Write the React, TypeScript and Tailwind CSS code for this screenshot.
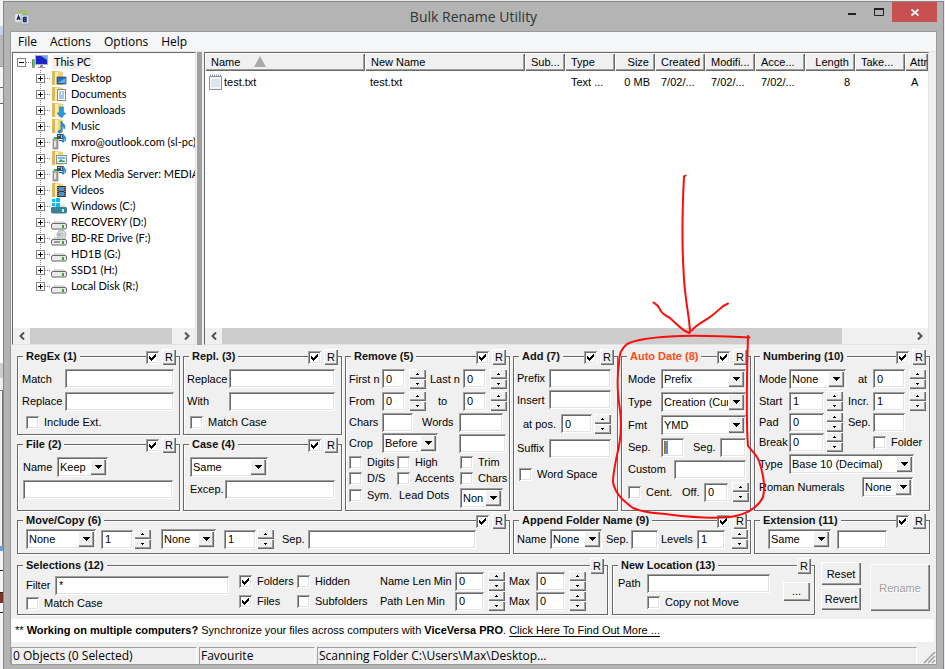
import React from "react";

const SUNKEN =
  "bg-white shadow-[inset_1px_1px_0_#a0a0a0,inset_-1px_-1px_0_#fff,inset_2px_2px_0_#696969,inset_-2px_-2px_0_#e3e3e3]";
const RAISED =
  "bg-[#f0f0f0] shadow-[inset_1px_1px_0_#fff,inset_-1px_-1px_0_#696969,inset_-2px_-2px_0_#a0a0a0]";

function Txt({ id, value = "", className = "w-8", label }: { id: string; value?: string; className?: string; label?: string }) {
  return (
    <input
      id={id}
      type="text"
      aria-label={label}
      defaultValue={value}
      className={`h-[19px] min-w-0 px-1 outline-none ${SUNKEN} ${className}`}
    />
  );
}

function Lbl({ to, children, className = "" }: { to: string; children: React.ReactNode; className?: string }) {
  return (
    <label htmlFor={to} className={`shrink-0 whitespace-nowrap ${className}`}>
      {children}
    </label>
  );
}

function Spin({ name }: { name: string }) {
  return (
    <span className="flex w-[17px] shrink-0 flex-col">
      <button type="button" aria-label={`Increase ${name}`} className={`flex h-[10px] items-center justify-center ${RAISED}`}>
        <svg width="3" height="2" viewBox="0 0 3 2" shapeRendering="crispEdges">
          <path d="M1 0h1v1h1v1H0V1h1z" />
        </svg>
      </button>
      <button type="button" aria-label={`Decrease ${name}`} className={`flex h-[10px] items-center justify-center ${RAISED}`}>
        <svg width="3" height="2" viewBox="0 0 3 2" shapeRendering="crispEdges">
          <path d="M0 0h3v1H2v1H1V1H0z" />
        </svg>
      </button>
    </span>
  );
}

function Sel({ id, value, className = "", label }: { id: string; value: string; className?: string; label?: string }) {
  return (
    <span className={`relative h-5 min-w-0 ${className}`}>
      <select
        id={id}
        aria-label={label}
        className={`block h-5 w-full appearance-none overflow-hidden pr-[14px] pl-[3px] outline-none ${SUNKEN}`}
      >
        <option>{value}</option>
      </select>
      <span className={`pointer-events-none absolute top-[2px] right-[2px] flex h-4 w-4 items-center justify-center ${RAISED}`}>
        <svg width="7" height="4" viewBox="0 0 7 4" shapeRendering="crispEdges">
          <path d="M0 0h7v1H6v1H5v1H4v1H3V3H2V2H1V1H0z" />
        </svg>
      </span>
    </span>
  );
}

function Tick({ checked = false, label, text, className = "" }: { checked?: boolean; label?: string; text?: string; className?: string }) {
  return (
    <label className={`flex shrink-0 items-center gap-[5px] whitespace-nowrap ${className}`}>
      <span className="grid h-[13px] w-[13px]">
        <input
          type="checkbox"
          aria-label={label}
          defaultChecked={checked}
          className={`peer h-[13px] w-[13px] appearance-none [grid-area:1/1] ${SUNKEN}`}
        />
        <svg viewBox="0 0 13 13" shapeRendering="crispEdges" className="pointer-events-none hidden h-[13px] w-[13px] [grid-area:1/1] peer-checked:block">
          <path d="M3 5h1v1h1v1h1V6h1V5h1V4h1V3h1v3H9v1H8v1H7v1H6v1H5V9H4V8H3z" />
        </svg>
      </span>
      {text}
    </label>
  );
}

function Group({ title, tick = true, hot = false, className = "", children }: { title: string; tick?: boolean; hot?: boolean; className?: string; children: React.ReactNode }) {
  return (
    <section className={`relative flex min-w-0 ${className}`}>
      <fieldset className="w-full min-w-0 border border-[#696969] shadow-[1px_1px_0_#fff,inset_1px_1px_0_#fff]">
        <legend className={`ml-[5px] h-[14px] bg-[#f0f0f0] px-[3px] leading-[14px] font-bold ${hot ? "text-[#ff4a14]" : "text-[#111]"}`}>{title}</legend>
        {children}
      </fieldset>
      <div className="absolute top-0 right-1 flex items-center">
        {tick && (
          <span className="bg-[#f0f0f0] pr-[3px]">
            <Tick checked label={`Enable ${title}`} />
          </span>
        )}
        <button type="button" aria-label={`Reset ${title}`} className={`h-4 w-[14px] text-center leading-4 ${RAISED}`}>
          R
        </button>
      </div>
    </section>
  );
}

const FOLDER = (
  <>
    <path d="M1 1h6l5 1v13H1z" fill="#efd27a" />
    <path d="M1 1h3v14H1z" fill="#dcb65a" />
    <path d="M4 2h3v13H4z" fill="#fbeeb0" />
  </>
);

function Drive() {
  return (
    <>
      <path d="M3 7h10l3 4H0z" fill="#dadada" />
      <rect x=".5" y="9.500" width="15" height="5.500" rx="1.500" fill="#e9e9ee" stroke="#66666e" />
      <rect x="11" y="11" width="2" height="3" fill="#3da52c" />
    </>
  );
}

function Glyph({ kind }: { kind: string }) {
  return (
    <svg width="16" height="16" viewBox="0 0 16 16" className="shrink-0" aria-hidden="true">
      {["desktop", "documents", "downloads", "music", "pictures", "videos"].includes(kind) && FOLDER}
      {kind === "desktop" && (
        <>
          <rect x="6" y="7" width="9" height="7" fill="#2b6cc4" stroke="#234" strokeWidth=".6" />
          <path d="M6.500 13l8-5v5z" fill="#5eb2f0" />
        </>
      )}
      {kind === "documents" && (
        <>
          <rect x="6.500" y="3.500" width="8" height="11" fill="#fff" stroke="#8a8a8a" />
          <path d="M8 6h2m1 0h2M8 8h2m1 0h2M8 10h5M8 12h5" stroke="#4f8fd0" />
        </>
      )}
      {kind === "downloads" && <path d="M8.500 5h4v6h2.500l-4.500 5L6 11h2.500z" fill="#1f9be8" stroke="#1270b8" strokeWidth=".5" />}
      {kind === "music" && <path d="M10 3c1 2 4 3 4 6l-1 2c0-2-1-3-2-3v5c0 2-4 3-4 1s2-2 3-2z" fill="#1e88d8" stroke="#1e88d8" strokeWidth=".8" />}
      {kind === "pictures" && (
        <>
          <rect x="5.500" y="5.500" width="10" height="8" fill="#e8f5fd" stroke="#8a9098" />
          <path d="M7 12l3-3 2 2 1-1 1 2z" fill="#3c9a64" />
          <path d="M7 7h7v2H7z" fill="#6bb8ee" />
        </>
      )}
      {kind === "videos" && (
        <>
          <rect x="6" y="4" width="9" height="11" fill="#333" />
          <path d="M8 5h5v4H8zM8 10h5v4H8z" fill="#4a94cf" />
          <path d="M7 5v10M14 5v10" stroke="#ddd" strokeDasharray="1 1" />
        </>
      )}
      {kind === "server" && (
        <>
          <path d="M2 5l5-2v12H2z" fill="#a8a8a8" stroke="#666" strokeWidth=".6" />
          <path d="M3 7h2v6H3z" fill="#e4e4e4" />
          <path d="M3 3h3v2H3z" fill="#37b24d" />
          <path d="M6 0h6v5H6zM8 6h4v1H8z" fill="#3a4a58" />
          <path d="M7 1h2v1H7zm3 0h1v3h-1z" fill="#8cd0ff" />
          <path d="M12 0l3 4-1 3v-3h-1v4h-2V6h1z" fill="#1e8fe0" stroke="#1e8fe0" strokeWidth=".8" />
        </>
      )}
      {kind === "pc" && (
        <>
          <path d="M0 5h3v9H0z" fill="#9c9c9c" />
          <path d="M0 6h1v6H0z" fill="#3a3" />
          <rect x="3.500" y="1.500" width="12" height="9" fill="#1a24c8" stroke="#aeb4ba" />
          <path d="M9 2h6v4z" fill="#6aa0ff" />
          <path d="M8 11h3v2h2v1H6v-1h2z" fill="#8e959c" />
        </>
      )}
      {kind === "windows" && (
        <>
          <Drive />
          <rect x="0" y="9" width="16" height="6" rx="1.500" fill="#3d8196" />
          <rect x="11" y="11" width="2" height="3" fill="#9fe" />
          <path d="M1 1h3v3H1zm4-1h4v4H5zM1 5h3v3H1zm4 0h4v4H5z" fill="#00bdf2" />
        </>
      )}
      {kind === "disc" && (
        <>
          <Drive />
          <circle cx="10.500" cy="4.800" r="4.500" fill="#d7dcd7" stroke="#888" strokeWidth=".6" />
          <circle cx="10.500" cy="4.800" r="1.300" fill="#fff" stroke="#777" strokeWidth=".6" />
          <path d="M7 3l2 1-1 3z" fill="#7cb07c" />
          <path d="M3 12h6" stroke="#444" />
        </>
      )}
      {kind === "drive" && <Drive />}
    </svg>
  );
}

const TREE: [string, string][] = [
  ["desktop", "Desktop"],
  ["documents", "Documents"],
  ["downloads", "Downloads"],
  ["music", "Music"],
  ["server", "mxro@outlook.com (sl-pc)"],
  ["pictures", "Pictures"],
  ["server", "Plex Media Server: MEDIA"],
  ["videos", "Videos"],
  ["windows", "Windows (C:)"],
  ["drive", "RECOVERY (D:)"],
  ["disc", "BD-RE Drive (F:)"],
  ["drive", "HD1B (G:)"],
  ["drive", "SSD1 (H:)"],
  ["drive", "Local Disk (R:)"],
];

function Branch({ open = false, last = false }: { open?: boolean; last?: boolean }) {
  return (
    <svg width="15" height="16" viewBox="0 0 15 16" shapeRendering="crispEdges" className="shrink-0" aria-hidden="true">
      {!open && <path d={last ? "M4.500 0v8" : "M4.500 0v16"} stroke="#808080" strokeDasharray="1 1" />}
      <path d="M9 8.500h6" stroke="#808080" strokeDasharray="1 1" />
      <rect x=".5" y="4.500" width="8" height="8" fill="#fff" stroke="#848484" />
      <path d={open ? "M2 8.500h5" : "M2 8.500h5M4.500 6v5"} stroke="#000" />
    </svg>
  );
}

function ScrollBar({ thumb, name }: { thumb: string; name: string }) {
  return (
    <div className="flex h-4 shrink-0 bg-[#f0f0f0]">
      <button type="button" aria-label={`Scroll ${name} left`} className="flex w-[17px] items-center justify-center">
        <svg width="6" height="8" viewBox="0 0 6 8" fill="none" stroke="#505050" strokeWidth="2">
          <path d="M5 .500L1.500 4 5 7.500" />
        </svg>
      </button>
      <div className="flex-1">
        <div className={`h-full bg-[#cdcdcd] ${thumb}`} />
      </div>
      <button type="button" aria-label={`Scroll ${name} right`} className="flex w-[17px] items-center justify-center">
        <svg width="6" height="8" viewBox="0 0 6 8" fill="none" stroke="#505050" strokeWidth="2">
          <path d="M1 .500L4.500 4 1 7.500" />
        </svg>
      </button>
    </div>
  );
}

const COLUMNS: { name: string; cell: string; width: string; right?: boolean }[] = [
  { name: "Name", cell: "test.txt", width: "w-[160px]" },
  { name: "New Name", cell: "test.txt", width: "w-[160px]" },
  { name: "Sub...", cell: "", width: "w-[40px]" },
  { name: "Type", cell: "Text ...", width: "w-[50px]" },
  { name: "Size", cell: "0 MB", width: "w-[40px]", right: true },
  { name: "Created", cell: "7/02/...", width: "w-[50px]" },
  { name: "Modifi...", cell: "7/02/...", width: "w-[50px]" },
  { name: "Acce...", cell: "7/02/...", width: "w-[50px]" },
  { name: "Length", cell: "8", width: "w-[50px]", right: true },
  { name: "Take...", cell: "", width: "w-[50px]" },
  { name: "Attr", cell: "A", width: "w-[23px]" },
];

function FileList() {
  return (
    <table className="w-full table-fixed border-collapse text-left">
      <colgroup>
        {COLUMNS.map((c) => (
          <col key={c.name} className={c.width} />
        ))}
      </colgroup>
      <thead>
        <tr>
          {COLUMNS.map((c, i) => (
            <th
              key={c.name}
              className={`h-[18px] overflow-hidden p-0 font-normal whitespace-nowrap ${i === 10 ? "pl-[5px]" : "px-[6px]"} ${c.right ? "text-right" : ""} ${RAISED}`}
            >
              {c.name}
              {i === 0 && (
                <svg width="12" height="11" viewBox="0 0 12 11" className="ml-[14px] inline-block align-[-1px]" aria-hidden="true">
                  <path d="M6 0l6 11H0z" fill="#a9a9a9" />
                </svg>
              )}
            </th>
          ))}
        </tr>
      </thead>
      <tbody>
        <tr>
          {COLUMNS.map((c, i) => (
            <td key={c.name} className={`h-[22px] overflow-hidden p-0 whitespace-nowrap ${c.right ? "pr-[5px] text-right" : i === 0 ? "pl-1" : i === 1 ? "pl-[5px]" : "pl-[6px]"}`}>
              {i === 0 ? (
                <span className="flex items-center gap-[2px]">
                  <svg width="13" height="16" viewBox="0 0 13 16" aria-hidden="true">
                    <path d="M.500 2.500h12v13H.500z" fill="#f4f8fa" stroke="#8b9296" />
                    <path d="M2 6h9M2 8h9M2 10h9M2 12h9" stroke="#c3d3dc" />
                    <path d="M1 1.500h11" stroke="#8b9296" strokeWidth="2" strokeDasharray="1 1" />
                  </svg>
                  {c.cell}
                </span>
              ) : (
                c.cell
              )}
            </td>
          ))}
        </tr>
      </tbody>
    </table>
  );
}

function Annotation() {
  return (
    <svg width="945" height="669" viewBox="0 0 945 669" fill="none" stroke="#fb0d0d" strokeWidth="2" strokeLinecap="round" strokeLinejoin="round" className="pointer-events-none absolute top-0 left-0" aria-hidden="true">
      <path d="M685.500 175.500l-1.500 1C682 215 682 245 683.500 270c1 30 6 45 6.500 62" />
      <path d="M653.500 302.500c3 2 5 3 6 6 2 6 6 6 11 10 7 6 11 12 19 14.500" />
      <path d="M728 303.500c-8 3-10 8-16 12-7 6-15 8-20 15" />
      <path d="M749.500 337.500C720 336 692 335 670 336.500c-18 1-34 3-43 7.500-6 5-8 10-8 20-3 18-1 33 1 46 2 17 1 30-3 45-2 11-4 18-4 27 2 11 9 18 20 26 10 5 24 5 36 6.500 24 3 44 4 61 2.500 14-2 27-8 33-20 3-12 0-24-4-36-3-7-7-10-11-15-2-24-1-76 0-110" />
    </svg>
  );
}

function BehindLeft() {
  return (
    <div className="flex w-[3px] shrink-0 flex-col bg-[#f6f6f6]" aria-hidden="true">
      <div className="h-[25px]" />
      <div className="h-[9px] bg-[#c6d2e6]" />
      <div className="h-[31px] bg-[#b9b9b9]" />
      <div className="h-[21px] border-t border-[#999]" />
      <div className="h-[17px] border-y border-[#666] bg-[#f0f0f0]" />
      <div className="h-[259px] bg-white" />
      <div className="h-[15px] bg-[#cdcdcd]" />
      <div className="h-[12px] bg-[#f0f0f0]" />
      <div className="h-[156px] border-t border-r border-[#777] bg-[#f0f0f0]" />
      <div className="h-[5px] bg-[#6a9fd0]" />
      <div className="h-[20px] border-b border-[#222]" />
      <div className="h-[22px] border-b border-[#222]" />
      <div className="h-[10px] bg-[#7b3527]" />
      <div className="h-[10px] border-b border-[#222]" />
      <div className="flex-1" />
    </div>
  );
}

export default function App() {
  return (
    <div className="relative flex min-h-screen overflow-hidden bg-[#e9edf3] pt-[1px] pr-[1px] font-['Liberation_Sans',Arial,sans-serif] text-[11px] leading-[14px] text-black">
      <BehindLeft />
      <div className="flex min-w-0 flex-1 flex-col border-t border-r border-l border-[#858585] bg-[#b4b4b4] px-[6px] pb-1">
        <header className="flex h-[29px] items-start">
          <div className="flex h-[29px] w-[99px] items-center pl-1">
            <svg width="16" height="16" viewBox="0 0 16 16" aria-label="Bulk Rename Utility" role="img">
              <path d="M3 5c2-5 7-5 8-3l2-1v5H8l2-2C8 2 5 3 5 5z" fill="#a3bf62" />
              <rect x="1" y="5" width="7" height="8" rx="1" fill="#e8eef8" stroke="#b8c4dc" strokeWidth=".6" />
              <rect x="7" y="6" width="8" height="9" rx="1" fill="#cfdcf0" stroke="#8898b8" strokeWidth=".6" />
              <path d="M3 11l1.500-4L6 11M3.500 9.700h2M9.500 8v5M9.500 8.500h2.500v4H9.500M9.500 10.500H12" fill="none" stroke="#17264e" strokeWidth="1.300" />
            </svg>
          </div>
          <h1 className="flex-1 text-center font-['Open_Sans','Noto_Sans',sans-serif] text-[14px] leading-[29px] text-[#333]">Bulk Rename Utility</h1>
          <button type="button" aria-label="Minimize" className="flex h-5 w-[27px] items-center justify-center">
            <svg width="8" height="8" viewBox="0 0 8 8"><path d="M0 5h8v2H0z" fill="#222" /></svg>
          </button>
          <button type="button" aria-label="Maximize" className="flex h-5 w-[27px] items-center justify-center">
            <svg width="10" height="8" viewBox="0 0 10 8"><path d="M.500 1h9v6.500h-9zM0 1h10" fill="none" stroke="#222" strokeWidth="1" /><path d="M0 0h10v2H0z" fill="#222" /></svg>
          </button>
          <button type="button" aria-label="Close" className="flex h-5 w-[45px] items-center justify-center bg-[#c75050]">
            <svg width="8" height="7" viewBox="0 0 8 7" stroke="#fff" strokeWidth="1.800"><path d="M.500.500l7 6M7.500.500l-7 6" /></svg>
          </button>
        </header>

        <main className="flex min-w-0 flex-1 flex-col border border-[#9a9a9a] bg-[#f0f0f0]">
          <nav className="flex h-[20px] gap-[13px] border-b border-[#e4e6e8] bg-[#f5f6f7] pl-[7px] font-['Open_Sans','Noto_Sans',sans-serif] text-[12px] leading-[19px]">
            <button type="button">File</button>
            <button type="button">Actions</button>
            <button type="button">Options</button>
            <button type="button">Help</button>
          </nav>

          <div className="flex flex-1 pr-[7px] pl-[1px]">
            <div className="mr-[1px] flex w-[184px] shrink-0 flex-col border border-t-[#696969] border-r-[#e3e3e3] border-b-[#e3e3e3] border-l-[#696969] bg-white">
              <ul className="flex-1 overflow-hidden pt-[1px] pl-1 font-[Lato,'Liberation_Sans',sans-serif] whitespace-nowrap">
                <li className="flex h-4 items-center">
                  <Branch open />
                  <Glyph kind="pc" />
                  <span className="ml-1 bg-[#f0f0f0] px-[2px]">This PC</span>
                </li>
                {TREE.map(([kind, name], i) => (
                  <li key={name} className="flex h-4 items-center pl-[19px]">
                    <Branch last={i === TREE.length - 1} />
                    <Glyph kind={kind} />
                    <span className="ml-1">{name}</span>
                  </li>
                ))}
              </ul>
              <ScrollBar thumb="w-[96%]" name="folders" />
            </div>
            <div className="mr-[2px] w-[5px] shrink-0 bg-[#a0a0a0]" />
            <div className="flex min-w-0 flex-1 flex-col border border-t-[#696969] border-r-[#e3e3e3] border-b-[#e3e3e3] border-l-[#696969] bg-white">
              <div className="flex-1 overflow-hidden">
                <FileList />
              </div>
              <ScrollBar thumb="w-[90%]" name="files" />
            </div>
          </div>

          <form className="flex flex-col gap-1 pt-1 pr-[6px] pb-1 pl-[6px]">
            <div className="grid grid-cols-[163fr_159fr_165fr_105fr_130fr_176fr] grid-rows-[86px_74px_41px] gap-x-[3px] gap-y-[2px]">
              <Group title="RegEx (1)">
                <div className="pt-1 pr-[5px] pl-1">
                  <div className="flex h-[23px] items-center"><Lbl to="rx-match" className="w-[43px]">Match</Lbl><Txt id="rx-match" className="flex-1" /></div>
                  <div className="flex h-[22px] items-center"><Lbl to="rx-replace" className="w-[43px]">Replace</Lbl><Txt id="rx-replace" className="flex-1" /></div>
                  <div className="flex h-[20px] items-center pl-1"><Tick text="Include Ext." /></div>
                </div>
              </Group>

              <Group title="Repl. (3)">
                <div className="pt-1 pr-[6px] pl-[3px]">
                  <div className="flex h-[23px] items-center"><Lbl to="rp-replace" className="w-[42px]">Replace</Lbl><Txt id="rp-replace" className="flex-1" /></div>
                  <div className="flex h-[22px] items-center"><Lbl to="rp-with" className="w-[42px]">With</Lbl><Txt id="rp-with" className="flex-1" /></div>
                  <div className="flex h-[20px] items-center pl-[3px]"><Tick text="Match Case" /></div>
                </div>
              </Group>

              <Group title="Remove (5)" className="row-span-2">
                <div className="pt-1 pr-[2px] pl-[3px]">
                  <div className="flex h-[23px] items-center">
                    <Lbl to="rm-first" className="w-[33px]">First n</Lbl><Txt id="rm-first" value="0" className="mr-1 w-[23px]" /><Spin name="First n" />
                    <Lbl to="rm-last" className="ml-auto w-[33px]">Last n</Lbl><Txt id="rm-last" value="0" className="mr-1 w-[23px]" /><Spin name="Last n" />
                  </div>
                  <div className="flex h-[22px] items-center">
                    <Lbl to="rm-from" className="w-[33px]">From</Lbl><Txt id="rm-from" value="0" className="mr-1 w-[23px]" /><Spin name="From" />
                    <Lbl to="rm-to" className="ml-auto w-[25px]">to</Lbl><Txt id="rm-to" value="0" className="mr-1 w-[23px]" /><Spin name="to" />
                  </div>
                  <div className="flex h-5 items-center pr-1">
                    <Lbl to="rm-chars" className="w-[33px]">Chars</Lbl><Txt id="rm-chars" className="w-[31px]" />
                    <Lbl to="rm-words" className="ml-auto w-[37px]">Words</Lbl><Txt id="rm-words" className="w-[44px]" />
                  </div>
                  <div className="flex h-[22px] items-center pr-[1px]">
                    <Lbl to="rm-crop" className="w-[33px]">Crop</Lbl><Sel id="rm-crop" value="Before" className="w-[56px]" />
                    <Txt id="rm-crop-text" label="Crop text" className="ml-auto w-[47px]" />
                  </div>
                  <div className="flex h-4 items-center">
                    <Tick text="Digits" className="w-[48px]" /><Tick text="High" className="w-[63px]" /><Tick text="Trim" />
                  </div>
                  <div className="flex h-4 items-center">
                    <Tick text="D/S" className="w-[48px]" /><Tick text="Accents" className="w-[63px]" /><Tick text="Chars" />
                  </div>
                  <div className="flex h-[22px] items-start pt-[2px]">
                    <Tick text="Sym." className="w-[50px]" /><Lbl to="rm-dots" className="w-[61px]">Lead Dots</Lbl><Sel id="rm-dots" value="Non" className="w-[43px]" />
                  </div>
                </div>
              </Group>

              <Group title="Add (7)" className="row-span-2">
                <div className="pt-1 pr-[6px] pl-[3px]">
                  <div className="flex h-[22px] items-center"><Lbl to="ad-prefix" className="w-[32px]">Prefix</Lbl><Txt id="ad-prefix" className="flex-1" /></div>
                  <div className="flex h-[21px] items-center"><Lbl to="ad-insert" className="w-[32px]">Insert</Lbl><Txt id="ad-insert" className="flex-1" /></div>
                  <div className="flex h-[27px] items-center pl-[6px]"><Lbl to="ad-pos" className="w-[38px]">at pos.</Lbl><Txt id="ad-pos" value="0" className="mr-[2px] flex-1" /><Spin name="at pos." /></div>
                  <div className="flex h-[22px] items-center"><Lbl to="ad-suffix" className="w-[32px]">Suffix</Lbl><Txt id="ad-suffix" className="flex-1" /></div>
                  <div className="flex h-[30px] items-center pl-[2px]"><Tick text="Word Space" /></div>
                </div>
              </Group>

              <Group title="Auto Date (8)" hot className="row-span-2">
                <div className="pt-1 pr-1 pl-[6px]">
                  <div className="flex h-[23px] items-center"><Lbl to="dt-mode" className="w-[33px]">Mode</Lbl><Sel id="dt-mode" value="Prefix" className="flex-1" /></div>
                  <div className="flex h-[23px] items-center"><Lbl to="dt-type" className="w-[33px]">Type</Lbl><Sel id="dt-type" value="Creation (Cur" className="flex-1" /></div>
                  <div className="flex h-[23px] items-center"><Lbl to="dt-fmt" className="w-[33px]">Fmt</Lbl><Sel id="dt-fmt" value="YMD" className="flex-1" /></div>
                  <div className="flex h-[22px] items-center">
                    <Lbl to="dt-sep" className="w-[33px]">Sep.</Lbl>
                    <span className={`flex h-[19px] w-[23px] items-center pl-[3px] ${SUNKEN}`}>
                      <span className="h-[13px] w-1 shrink-0 border-l border-[#c06010] bg-[#3399ff]" />
                      <input id="dt-sep" type="text" className="w-3 min-w-0 outline-none" />
                    </span>
                    <Lbl to="dt-seg" className="ml-auto w-[27px]">Seg.</Lbl><Txt id="dt-seg" className="w-[26px]" />
                  </div>
                  <div className="flex h-[22px] items-center"><Lbl to="dt-custom" className="w-[46px]">Custom</Lbl><Txt id="dt-custom" className="flex-1" /></div>
                  <div className="-mr-[3px] flex h-[24px] items-center">
                    <Tick text="Cent." className="w-[54px]" /><Lbl to="dt-off" className="w-[22px]">Off.</Lbl><Txt id="dt-off" value="0" className="mr-1 flex-1" /><Spin name="Off." />
                  </div>
                </div>
              </Group>

              <Group title="Numbering (10)" className="row-span-2">
                <div className="pt-1 pr-[3px] pl-1">
                  <div className="flex h-[23px] items-center">
                    <Lbl to="nm-mode" className="w-[30px]">Mode</Lbl><Sel id="nm-mode" value="None" className="w-[57px]" />
                    <Lbl to="nm-at" className="ml-auto w-[15px]">at</Lbl><Txt id="nm-at" value="0" className="mr-1 w-8" /><Spin name="at" />
                  </div>
                  <div className="flex h-[22px] items-center">
                    <Lbl to="nm-start" className="w-[30px]">Start</Lbl><Txt id="nm-start" value="1" className="mr-[2px] w-[35px]" /><Spin name="Start" />
                    <Lbl to="nm-incr" className="ml-auto w-[25px]">Incr.</Lbl><Txt id="nm-incr" value="1" className="mr-1 w-8" /><Spin name="Incr." />
                  </div>
                  <div className="flex h-5 items-center">
                    <Lbl to="nm-pad" className="w-[30px]">Pad</Lbl><Txt id="nm-pad" value="0" className="mr-[2px] w-[35px]" /><Spin name="Pad" />
                    <Lbl to="nm-sep" className="ml-auto w-[25px]">Sep.</Lbl><Txt id="nm-sep" className="mr-[21px] w-8" />
                  </div>
                  <div className="flex h-5 items-center">
                    <Lbl to="nm-break" className="w-[30px]">Break</Lbl><Txt id="nm-break" value="0" className="mr-[2px] w-[35px]" /><Spin name="Break" />
                    <Tick text="Folder" className="ml-auto w-[53px]" />
                  </div>
                  <div className="flex h-[23px] items-center pr-[12px]"><Lbl to="nm-type" className="w-[30px]">Type</Lbl><Sel id="nm-type" value="Base 10 (Decimal)" className="flex-1" /></div>
                  <div className="flex h-[24px] items-center justify-between pr-[13px]"><Lbl to="nm-roman">Roman Numerals</Lbl><Sel id="nm-roman" value="None" className="w-[51px]" /></div>
                </div>
              </Group>

              <Group title="File (2)">
                <div className="pt-1 pr-[6px] pl-[5px]">
                  <div className="flex h-[23px] items-center"><Lbl to="fl-name" className="w-[34px]">Name</Lbl><Sel id="fl-name" value="Keep" className="w-[51px]" /></div>
                  <div className="flex h-[22px] items-center"><Txt id="fl-text" label="File name" className="flex-1" /></div>
                </div>
              </Group>

              <Group title="Case (4)">
                <div className="pt-1 pr-[6px] pl-[6px]">
                  <div className="flex h-[23px] items-center"><Sel id="cs-mode" label="Case" value="Same" className="w-[78px]" /></div>
                  <div className="flex h-[22px] items-center"><Lbl to="cs-excep" className="w-[35px]">Excep.</Lbl><Txt id="cs-excep" className="flex-1" /></div>
                </div>
              </Group>

              <Group title="Move/Copy (6)" className="col-span-3">
                <div className="flex h-6 items-center pr-[33px] pl-2">
                  <Sel id="mv-mode" label="Move or copy" value="None" className="mr-[5px] w-[70px]" />
                  <Txt id="mv-n" label="Move count" value="1" className="mr-[1px] w-8" /><Spin name="move count" />
                  <Sel id="mv-to" label="Move to" value="None" className="mr-[8px] ml-[10px] w-[55px]" />
                  <Txt id="mv-pos" label="Move position" value="1" className="mr-[1px] w-8" /><Spin name="move position" />
                  <Lbl to="mv-sep" className="ml-2 w-[26px]">Sep.</Lbl><Txt id="mv-sep" className="flex-1" />
                </div>
              </Group>

              <Group title="Append Folder Name (9)" className="col-span-2">
                <div className="flex h-6 items-center pr-[2px] pl-[3px]">
                  <Lbl to="ap-name" className="w-[33px]">Name</Lbl><Sel id="ap-name" value="None" className="mr-1 w-[52px]" />
                  <Lbl to="ap-sep" className="w-[25px]">Sep.</Lbl><Txt id="ap-sep" className="w-[27px]" />
                  <Lbl to="ap-levels" className="ml-auto w-[36px]">Levels</Lbl><Txt id="ap-levels" value="1" className="mr-[6px] w-[28px]" /><Spin name="Levels" />
                </div>
              </Group>

              <Group title="Extension (11)">
                <div className="flex h-6 items-center gap-[6px] pr-[42px] pl-[13px]">
                  <Sel id="ex-mode" label="Extension" value="Same" className="w-[63px] shrink-0" />
                  <Txt id="ex-text" label="Extension text" className="flex-1" />
                </div>
              </Group>
            </div>

            <div className="flex h-[57px]">
              <Group title="Selections (12)" tick={false} className="mr-1 flex-1">
                <div className="flex pr-[21px] pl-2">
                  <div className="flex-1 pt-[3px]">
                    <div className="flex h-5 items-center"><Lbl to="sl-filter" className="w-[29px]">Filter</Lbl><Txt id="sl-filter" value="*" className="flex-1" /></div>
                    <div className="flex h-4 items-center"><Tick text="Match Case" /></div>
                  </div>
                  <div className="ml-[10px] w-[58px]">
                    <div className="flex h-[18px] items-center"><Tick checked text="Folders" /></div>
                    <div className="flex h-[22px] items-center"><Tick checked text="Files" /></div>
                  </div>
                  <div className="w-[83px]">
                    <div className="flex h-[18px] items-center"><Tick text="Hidden" /></div>
                    <div className="flex h-[22px] items-center"><Tick text="Subfolders" /></div>
                  </div>
                  <div>
                    <div className="flex h-[18px] items-center">
                      <Lbl to="sl-nmin" className="w-[75px]">Name Len Min</Lbl><Txt id="sl-nmin" value="0" className="mr-1 w-[29px]" /><Spin name="name length minimum" />
                      <Lbl to="sl-nmax" className="ml-1 w-[27px]">Max</Lbl><Txt id="sl-nmax" value="0" className="mr-1 w-[29px]" /><Spin name="name length maximum" />
                    </div>
                    <div className="flex h-[22px] items-center">
                      <Lbl to="sl-pmin" className="w-[75px]">Path Len Min</Lbl><Txt id="sl-pmin" value="0" className="mr-1 w-[29px]" /><Spin name="path length minimum" />
                      <Lbl to="sl-pmax" className="ml-1 w-[27px]">Max</Lbl><Txt id="sl-pmax" value="0" className="mr-1 w-[29px]" /><Spin name="path length maximum" />
                    </div>
                  </div>
                </div>
              </Group>

              <Group title="New Location (13)" tick={false} className="mr-[6px] w-[203px]">
                <div className="flex items-center gap-[13px] pr-1 pl-[5px]">
                  <div className="min-w-0 flex-1">
                    <div className="flex h-[22px] items-center"><Lbl to="nl-path" className="w-[29px]">Path</Lbl><Txt id="nl-path" className="flex-1" /></div>
                    <div className="flex h-4 items-center pl-[29px]"><Tick text="Copy not Move" /></div>
                  </div>
                  <button type="button" aria-label="Browse" className={`h-[19px] w-[27px] leading-[14px] ${RAISED}`}>...</button>
                </div>
              </Group>

              <div className="mr-[9px] flex w-[40px] flex-col gap-[2px] pt-1">
                <button type="button" className={`h-[23px] whitespace-nowrap ${RAISED}`}>Reset</button>
                <button type="button" className={`h-[23px] whitespace-nowrap ${RAISED}`}>Revert</button>
              </div>
              <button type="button" disabled className={`mt-[6px] h-[47px] w-[60px] text-[11px] text-[#a0a0a0] [text-shadow:1px_1px_0_#fff] ${RAISED}`}>Rename</button>
            </div>
          </form>

          <p className="mr-[2px] h-[23px] bg-white pl-1 leading-[23px] whitespace-nowrap">
            ** <b>Working on multiple computers?</b> Synchronize your files across computers with <b>ViceVersa PRO</b>.{" "}
            <a href="#more" className="underline underline-offset-2">Click Here To Find Out More ...</a>
          </p>

          <footer className="mt-[5px] flex h-[17px] gap-[2px] font-['Open_Sans','Noto_Sans',sans-serif] text-[12px] leading-4 whitespace-nowrap">
            <span className="w-[186px] border-t border-r border-l border-t-[#a0a0a0] border-r-white border-l-[#a0a0a0] pl-[1px]">0 Objects (0 Selected)</span>
            <span className="w-[116px] border-t border-r border-l border-t-[#a0a0a0] border-r-white border-l-[#a0a0a0] pl-[1px]">Favourite</span>
            <span className="flex-1 border-t border-r border-l border-t-[#a0a0a0] border-r-white border-l-[#a0a0a0] pl-[1px]">Scanning Folder C:\Users\Max\Desktop...</span>
            <svg width="17" height="17" viewBox="0 0 17 17" stroke="#a0a0a0" strokeWidth="1.500" aria-hidden="true">
              <path d="M5 16L16 5M9 16l7-7M13 16l3-3" />
            </svg>
          </footer>
        </main>
      </div>
      <Annotation />
    </div>
  );
}
